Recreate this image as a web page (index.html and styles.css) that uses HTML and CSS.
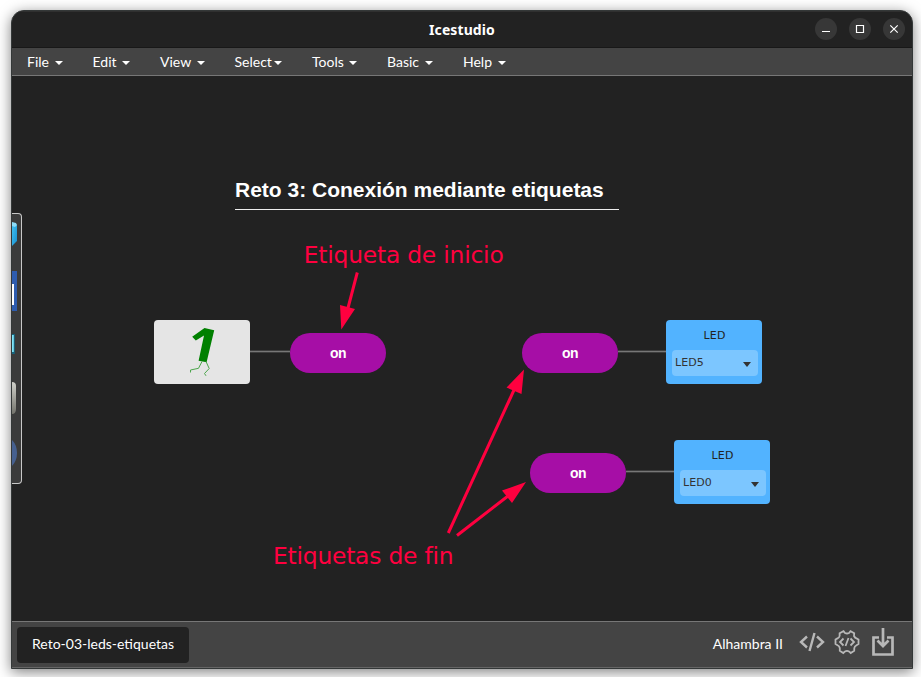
FILE: index.html
```html
<!DOCTYPE html>
<html lang="es">
<head>
<meta charset="utf-8">
<title>Icestudio</title>
<link rel="stylesheet" href="styles.css">
</head>
<body>
<div class="window">
  <header class="titlebar">
    <span class="title">Icestudio</span>
    <div class="controls">
      <span class="control"><svg viewBox="0 0 22 22"><path d="M7 13.5h8"/></svg></span>
      <span class="control"><svg viewBox="0 0 22 22"><path d="M7.5 7.5h7v7h-7z"/></svg></span>
      <span class="control"><svg viewBox="0 0 22 22"><path d="M7.3 7.3l7.4 7.4M14.7 7.3l-7.4 7.4"/></svg></span>
    </div>
  </header>
  <nav class="menu">
    <span class="item file">File</span>
    <span class="item edit">Edit</span>
    <span class="item view">View</span>
    <span class="item select">Select</span>
    <span class="item tools">Tools</span>
    <span class="item basic">Basic</span>
    <span class="item help">Help</span>
  </nav>
  <main class="canvas">
    <aside class="dock">
      <svg viewBox="0 0 10 271" width="10" height="271">
        <defs>
          <linearGradient id="cube" x1="0" x2="1" y2="1"><stop offset="0" stop-color="#45c3f2"/><stop offset="1" stop-color="#168fd0"/></linearGradient>
          <linearGradient id="metal" x1="0" x2="0" y1="0" y2="1"><stop offset="0" stop-color="#d0d0ca"/><stop offset="1" stop-color="#73736c"/></linearGradient>
        </defs>
        <path d="M0 10l5 2v16l-5 5z" fill="url(#cube)"/><path d="M0 9l4 1 1 2-2 2-3-1z" fill="#8ddcf8"/>
        <path d="M0 58h5v40H0z" fill="#2e5caf"/><path d="M0 71h2v21H0z" fill="#fff"/>
        <path d="M0 121h2.8v20H0z" fill="#17647d"/><path d="M0 122h1.8v17H0z" fill="#7fe3f7"/>
        <path d="M0 169q4 0 4 4v23q0 5-4 5z" fill="url(#metal)"/>
        <path d="M0 227q5 5 5 13t-5 13z" fill="#46608f"/>
      </svg>
    </aside>
    <h1 class="heading">Reto 3: Conexión mediante etiquetas</h1>
    <svg class="wires" viewBox="12 76 900 545">
      <g class="wire-edge"><path d="M250 351.5h40M618 351.5h48M626 471.5h48"/></g>
      <g class="wire"><path d="M250 351.5h40M618 351.5h48M626 471.5h48"/></g>
    </svg>
    <div class="node constant">
      <svg viewBox="0 0 96 64">
        <path class="one" d="M60.2 10.2L50.5 8L38.2 16.7L41.8 20.5L50 15.6L44.6 40.7L52.6 42.2z"/>
        <path class="legs" d="M48 41.5L44.5 48.3L36.5 50V52.5M52 41.5L55.2 48.5L50.5 53.5L52 55.8"/>
      </svg>
    </div>
    <div class="node label start">on</div>
    <div class="node label end-top">on</div>
    <div class="node label end-bottom">on</div>
    <div class="node led led-top"><span class="led-title">LED</span><span class="led-pin">LED5</span></div>
    <div class="node led led-bottom"><span class="led-title">LED</span><span class="led-pin">LED0</span></div>
    <svg class="notes" viewBox="12 76 900 545">
      <path class="shaft" d="M357.3 272.5L348 308M448.3 533L514 390M457 535.5L508 496"/>
      <path class="tip" d="M341.3 329.5L340 305L355 309zM524 369.5L521.5 394L506.5 387.5zM526 482L512 503L502 490.5z"/>
      <text x="303.7" y="262.6" textLength="200">Etiqueta de inicio</text>
      <text x="273" y="563.6" textLength="180.5">Etiquetas de fin</text>
    </svg>
  </main>
  <footer class="footer">
    <span class="tab">Reto-03-leds-etiquetas</span>
    <div class="tools-right">
      <span class="board">Alhambra II</span>
      <svg class="code" viewBox="0 0 26 22" width="26" height="22"><path d="M8 5.5L2 11L8 16.5M18 5.5l6 5.5L18 16.5M15.5 2L10.5 20"/></svg>
      <svg class="gear" viewBox="0 0 26 26" width="26" height="26"><path d="M9.5 2.2L11 4Q13 5 15 4L16.5 2.2L20.2 4.2L20 7Q21 9 22.5 9.4L24.5 10.5V15L22.5 16.2Q20.5 17.2 20.3 19L20.2 21.8L16.7 24L15 22.4Q13 21.2 11 22.4L9.3 24L5.8 21.8V19Q5.3 17 3.5 16.2L1.5 15V10.5L3.5 9.4Q5.4 8.5 5.6 7V4.2z"/><path d="M9.5 9.5L6 13l3.5 3.5M16.5 9.5L20 13l-3.5 3.5M14.5 9L11.5 17"/></svg>
      <svg class="load" viewBox="0 0 22 28" width="22" height="28"><path d="M7 9.5H1.5v17h19v-17H15M11 0v17M5.5 12.5L11 18l5.5-5.5"/></svg>
    </div>
  </footer>
</div>
</body>
</html>
```
FILE: styles.css
```css
* { box-sizing: border-box; }
body {
  margin: 0;
  width: 921px;
  height: 677px;
  padding: 10px 8px 8px 11px;
  overflow: hidden;
  background: #fff;
  font-family: Lato, sans-serif;
  color: #fff;
}
.window {
  display: flex;
  flex-direction: column;
  width: 902px;
  height: 659px;
  border: 1px solid #343838;
  border-radius: 13px 13px 0 0;
  background: #222;
  overflow: hidden;
  box-shadow: 0 3px 14px rgba(0, 0, 0, .5);
}
.titlebar {
  display: grid;
  grid-template-columns: 1fr auto 1fr;
  align-items: center;
  height: 37px;
  flex: none;
  border-top: 1px solid #303030;
  border-bottom: 1px solid #181818;
}
.title {
  grid-column: 2;
  font: bold 14px/20px "Noto Sans", sans-serif;
  letter-spacing: .1px;
}
.controls {
  display: flex;
  justify-content: flex-end;
  gap: 12px;
  padding: 0 7px 2px 0;
}
.control { width: 22px; height: 22px; border-radius: 50%; background: #373737; }
.control svg { display: block; fill: none; stroke: #fff; stroke-width: 1.2; }
.menu {
  display: flex;
  flex: none;
  height: 28px;
  padding-left: 15px;
  background: #444;
  border-bottom: 1px solid #777;
  font-size: 14px;
  line-height: 28px;
}
.item { display: flex; align-items: center; justify-content: space-between; }
.item::after {
  content: "";
  margin-top: 2px;
  border: 4px solid transparent;
  border-top-color: #fff;
  border-bottom: 0;
}
.file { width: 36px; margin-right: 29.5px; }
.edit { width: 37.5px; margin-right: 30px; }
.view { width: 45px; margin-right: 29.5px; }
.select { width: 47.5px; margin-right: 30px; }
.tools { width: 45px; margin-right: 30px; }
.basic { width: 46px; margin-right: 30px; }
.help { width: 43px; }
.canvas { position: relative; flex: 1; background: #222; }
.dock {
  position: absolute;
  left: 0;
  top: 137px;
  width: 10px;
  height: 271px;
  overflow: hidden;
  border: 1px solid #c8c8c8;
  border-left: 0;
  border-radius: 0 4px 4px 0;
  background: #3b3b3b;
}
.dock svg { display: block; margin-top: -1px; }
.heading {
  position: absolute;
  left: 223px;
  top: 102px;
  width: 384px;
  height: 32px;
  margin: 0;
  border-bottom: 1px solid #eee;
  font: bold 21px/24px "Liberation Sans", sans-serif;
  white-space: nowrap;
}
.wires, .notes { position: absolute; left: 0; top: 0; width: 900px; height: 545px; }
.wire-edge { stroke: #484848; stroke-width: 2.4; }
.wire { stroke: #777; stroke-width: 1; }
.shaft { stroke: #ff003f; stroke-width: 3; }
.tip { fill: #ff003f; }
.notes text { fill: #ff003f; font: 23.4px "DejaVu Sans", sans-serif; }
.node { position: absolute; width: 96px; }
.constant { left: 142px; top: 244px; height: 64px; border-radius: 4px; background: #e5e5e5; }
.constant svg { display: block; }
.one { fill: #008000; }
.legs { fill: none; stroke: #4ca64c; stroke-width: 1; stroke-linejoin: miter; }
.label {
  height: 40px;
  border-radius: 20px;
  background: #a60ea6;
  font: bold 14px/40px "Liberation Sans", sans-serif;
  letter-spacing: -.5px;
  text-align: center;
}
.start { left: 278px; top: 257px; }
.end-top { left: 510px; top: 257px; }
.end-bottom { left: 518px; top: 377px; }
.led {
  height: 64px;
  padding: 5px 4px 0 6px;
  border-radius: 4px;
  background: #52b3ff;
  color: #333;
  font: 11px "DejaVu Sans", sans-serif;
}
.led-top { left: 654px; top: 244px; }
.led-bottom { left: 662px; top: 364px; }
.led-title {
  display: block;
  height: 25px;
  padding-right: 1px;
  line-height: 22px;
  letter-spacing: .2px;
  text-align: center;
  color: #222;
}
.led-pin {
  display: flex;
  align-items: center;
  justify-content: space-between;
  height: 26px;
  padding: 0 7px 2px 3px;
  border-radius: 4px;
  background: #7cc6ff;
  letter-spacing: .1px;
}
.led-pin::after {
  content: "";
  margin-top: 5px;
  border: 4px solid transparent;
  border-top: 5px solid #333;
  border-bottom: 0;
}
.footer {
  display: flex;
  flex: none;
  justify-content: space-between;
  align-items: center;
  height: 47px;
  padding: 0 18px 0 5px;
  background: #444;
  border-top: 1px solid #777;
  border-bottom: 1px solid #666;
  font-size: 14px;
}
.tab { width: 172px; height: 36px; padding-left: 15px; border-radius: 4px; background: #222; line-height: 33px; }
.tools-right { display: flex; align-items: center; padding-bottom: 2px; }
.tools-right svg { fill: none; stroke: #b8b8b8; }
.board { margin-right: 16px; }
.code { margin-top: -3px; margin-right: 9px; stroke-width: 2.4; }
.gear { margin-top: -3px; margin-right: 12px; stroke-width: 1.8; }
.load { margin-top: -3px; stroke-width: 2.7; }
```
